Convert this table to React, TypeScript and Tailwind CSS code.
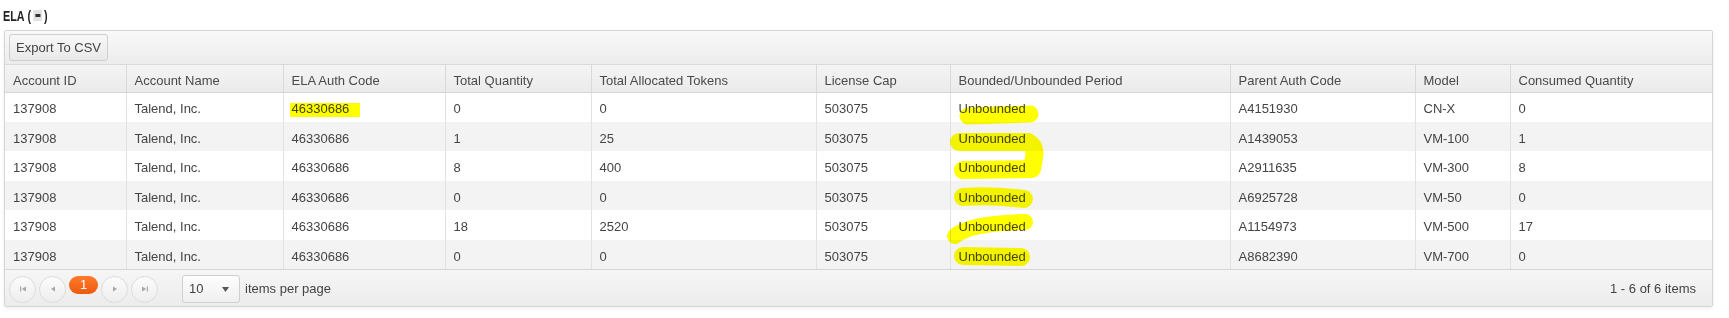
import React from 'react';

type Row = {
  accountId: string;
  accountName: string;
  authCode: string;
  totalQty: string;
  tokens: string;
  cap: string;
  period: string;
  parent: string;
  model: string;
  consumed: string;
};

const rows: Row[] = [
  { accountId: '137908', accountName: 'Talend, Inc.', authCode: '46330686', totalQty: '0', tokens: '0', cap: '503075', period: 'Unbounded', parent: 'A4151930', model: 'CN-X', consumed: '0' },
  { accountId: '137908', accountName: 'Talend, Inc.', authCode: '46330686', totalQty: '1', tokens: '25', cap: '503075', period: 'Unbounded', parent: 'A1439053', model: 'VM-100', consumed: '1' },
  { accountId: '137908', accountName: 'Talend, Inc.', authCode: '46330686', totalQty: '8', tokens: '400', cap: '503075', period: 'Unbounded', parent: 'A2911635', model: 'VM-300', consumed: '8' },
  { accountId: '137908', accountName: 'Talend, Inc.', authCode: '46330686', totalQty: '0', tokens: '0', cap: '503075', period: 'Unbounded', parent: 'A6925728', model: 'VM-50', consumed: '0' },
  { accountId: '137908', accountName: 'Talend, Inc.', authCode: '46330686', totalQty: '18', tokens: '2520', cap: '503075', period: 'Unbounded', parent: 'A1154973', model: 'VM-500', consumed: '17' },
  { accountId: '137908', accountName: 'Talend, Inc.', authCode: '46330686', totalQty: '0', tokens: '0', cap: '503075', period: 'Unbounded', parent: 'A8682390', model: 'VM-700', consumed: '0' },
];

const columns: { title: string; key: keyof Row; width: string }[] = [
  { title: 'Account ID', key: 'accountId', width: 'w-[121px]' },
  { title: 'Account Name', key: 'accountName', width: 'w-[157px]' },
  { title: 'ELA Auth Code', key: 'authCode', width: 'w-[162px]' },
  { title: 'Total Quantity', key: 'totalQty', width: 'w-[146px]' },
  { title: 'Total Allocated Tokens', key: 'tokens', width: 'w-[225px]' },
  { title: 'License Cap', key: 'cap', width: 'w-[134px]' },
  { title: 'Bounded/Unbounded Period', key: 'period', width: 'w-[280px]' },
  { title: 'Parent Auth Code', key: 'parent', width: 'w-[185px]' },
  { title: 'Model', key: 'model', width: 'w-[95px]' },
  { title: 'Consumed Quantity', key: 'consumed', width: 'w-[202px]' },
];

const PagerArrow: React.FC<{ dir: 'first' | 'prev' | 'next' | 'last' }> = ({ dir }) => (
  <svg width="8" height="8" viewBox="0 0 8 8" className="text-[#a8a8a8]">
    {dir === 'first' && (
      <>
        <rect x="1" y="1.5" width="1.2" height="5" fill="currentColor" />
        <path d="M7 1.5 L2.8 4 L7 6.5 Z" fill="currentColor" />
      </>
    )}
    {dir === 'prev' && <path d="M6 1.5 L2 4 L6 6.5 Z" fill="currentColor" />}
    {dir === 'next' && <path d="M2 1.5 L6 4 L2 6.5 Z" fill="currentColor" />}
    {dir === 'last' && (
      <>
        <path d="M1 1.5 L5.2 4 L1 6.5 Z" fill="currentColor" />
        <rect x="5.8" y="1.5" width="1.2" height="5" fill="currentColor" />
      </>
    )}
  </svg>
);

const PagerButton: React.FC<{ dir: 'first' | 'prev' | 'next' | 'last' }> = ({ dir }) => (
  <button className="w-[27px] h-[27px] rounded-full border border-[#dcdcdc] bg-gradient-to-b from-[#fbfbfb] to-[#eeeeee] flex items-center justify-center">
    <PagerArrow dir={dir} />
  </button>
);

const App: React.FC = () => {
  return (
    <div className="relative w-[1729px] h-[318px] bg-white text-[13px] text-[#444] font-['Liberation_Sans',Arial,sans-serif]">
      {/* title */}
      <div className="h-[30px] pl-[3px] flex items-center">
        <div className="flex items-center origin-left scale-x-[0.72] font-['Liberation_Sans',Arial,sans-serif] font-bold text-[15px] text-[#222] leading-none">
          <span>ELA</span>
          <span className="ml-[4px]">(</span>
          <span className="mx-[3px] w-[12px] h-[11px] bg-[#e2e2e2] flex items-center justify-center">
            <span className="w-[7px] h-[3px] bg-[#333]" />
          </span>
          <span>)</span>
        </div>
      </div>

      {/* grid */}
      <div className="ml-[4px] w-[1709px] border border-[#d5d5d5] rounded-[2px] shadow-[0_2px_4px_rgba(0,0,0,0.06)] overflow-hidden">
        <div className="h-[34px] pl-[4px] flex items-center bg-gradient-to-b from-[#f9f9f9] to-[#ececec] border-b border-[#d9d9d9]">
          <button className="h-[27px] px-[6px] pt-[1px] border border-[#cfcfcf] rounded-[3px] bg-gradient-to-b from-[#f8f8f8] to-[#e9e9e9] text-[#444] text-[13px]">
            Export To CSV
          </button>
        </div>

        <table className="w-full table-fixed border-collapse">
          <colgroup>
            {columns.map((c) => (
              <col key={c.key} className={c.width} />
            ))}
          </colgroup>
          <thead>
            <tr className="h-[27px] bg-gradient-to-b from-[#f4f4f4] to-[#ebebeb]">
              {columns.map((c, i) => (
                <th
                  key={c.key}
                  className={`text-left font-normal text-[#4a4a4a] pl-2 pt-[4px] border-b border-[#d5d5d5] ${i > 0 ? 'border-l border-l-[#d9d9d9]' : ''}`}
                >
                  {c.title}
                </th>
              ))}
            </tr>
          </thead>
          <tbody>
            {rows.map((r, ri) => (
              <tr key={ri} className={`h-[29.5px] ${ri % 2 === 1 ? 'bg-[#f3f3f3]' : 'bg-white'}`}>
                {columns.map((c, i) => (
                  <td key={c.key} className={`pl-2 pt-[4px] whitespace-nowrap ${i > 0 ? 'border-l border-[#e2e2e2]' : ''}`}>
                    {r[c.key]}
                  </td>
                ))}
              </tr>
            ))}
          </tbody>
        </table>

        {/* footer */}
        <div className="h-[37px] border-t border-[#d5d5d5] bg-gradient-to-b from-[#f6f6f6] to-[#ececec] pl-[4px] pr-[16px] pt-[2px] flex items-center">
          <div className="flex items-center gap-[3px] h-full">
            <PagerButton dir="first" />
            <PagerButton dir="prev" />
            <span className="self-start mt-[4px] w-[29px] h-[18px] rounded-full bg-gradient-to-b from-[#ff7a2a] to-[#ef5a0c] text-white text-[13px] leading-[18px] text-center">
              1
            </span>
            <PagerButton dir="next" />
            <PagerButton dir="last" />
          </div>
          <div className="ml-[24px] w-[58px] h-[28px] border border-[#cfcfcf] rounded-[3px] bg-gradient-to-b from-[#fdfdfd] to-[#f0f0f0] flex items-center justify-between pl-[6px] pr-[10px]">
            <span className="text-[#444]">10</span>
            <svg width="7" height="5" viewBox="0 0 7 5">
              <path d="M0 0 L7 0 L3.5 5 Z" fill="#555" />
            </svg>
          </div>
          <span className="ml-[5px] text-[#444]">items per page</span>
          <span className="ml-auto text-[#444]">1 - 6 of 6 items</span>
        </div>
      </div>

      {/* highlighter marks drawn over the screenshot */}
      <svg className="absolute inset-0 pointer-events-none mix-blend-multiply" width="1729" height="318">
        <g fill="none" stroke="#ffff00" strokeLinecap="round" strokeLinejoin="round">
          <path d="M290 110 L360 110" strokeWidth="14" strokeLinecap="butt" />
          <path d="M968 116 L1030 114" strokeWidth="17" />
          <path d="M959 142 L1028 142 Q1036 146 1034 158 L1032 169 L963 170" strokeWidth="18" />
          <path d="M963 197 Q990 195 1024 199" strokeWidth="18" />
          <path d="M955 236 Q970 223 1025 222" strokeWidth="16" />
          <path d="M963 256 L1021 257" strokeWidth="18" />
        </g>
      </svg>
    </div>
  );
};

export default App;
